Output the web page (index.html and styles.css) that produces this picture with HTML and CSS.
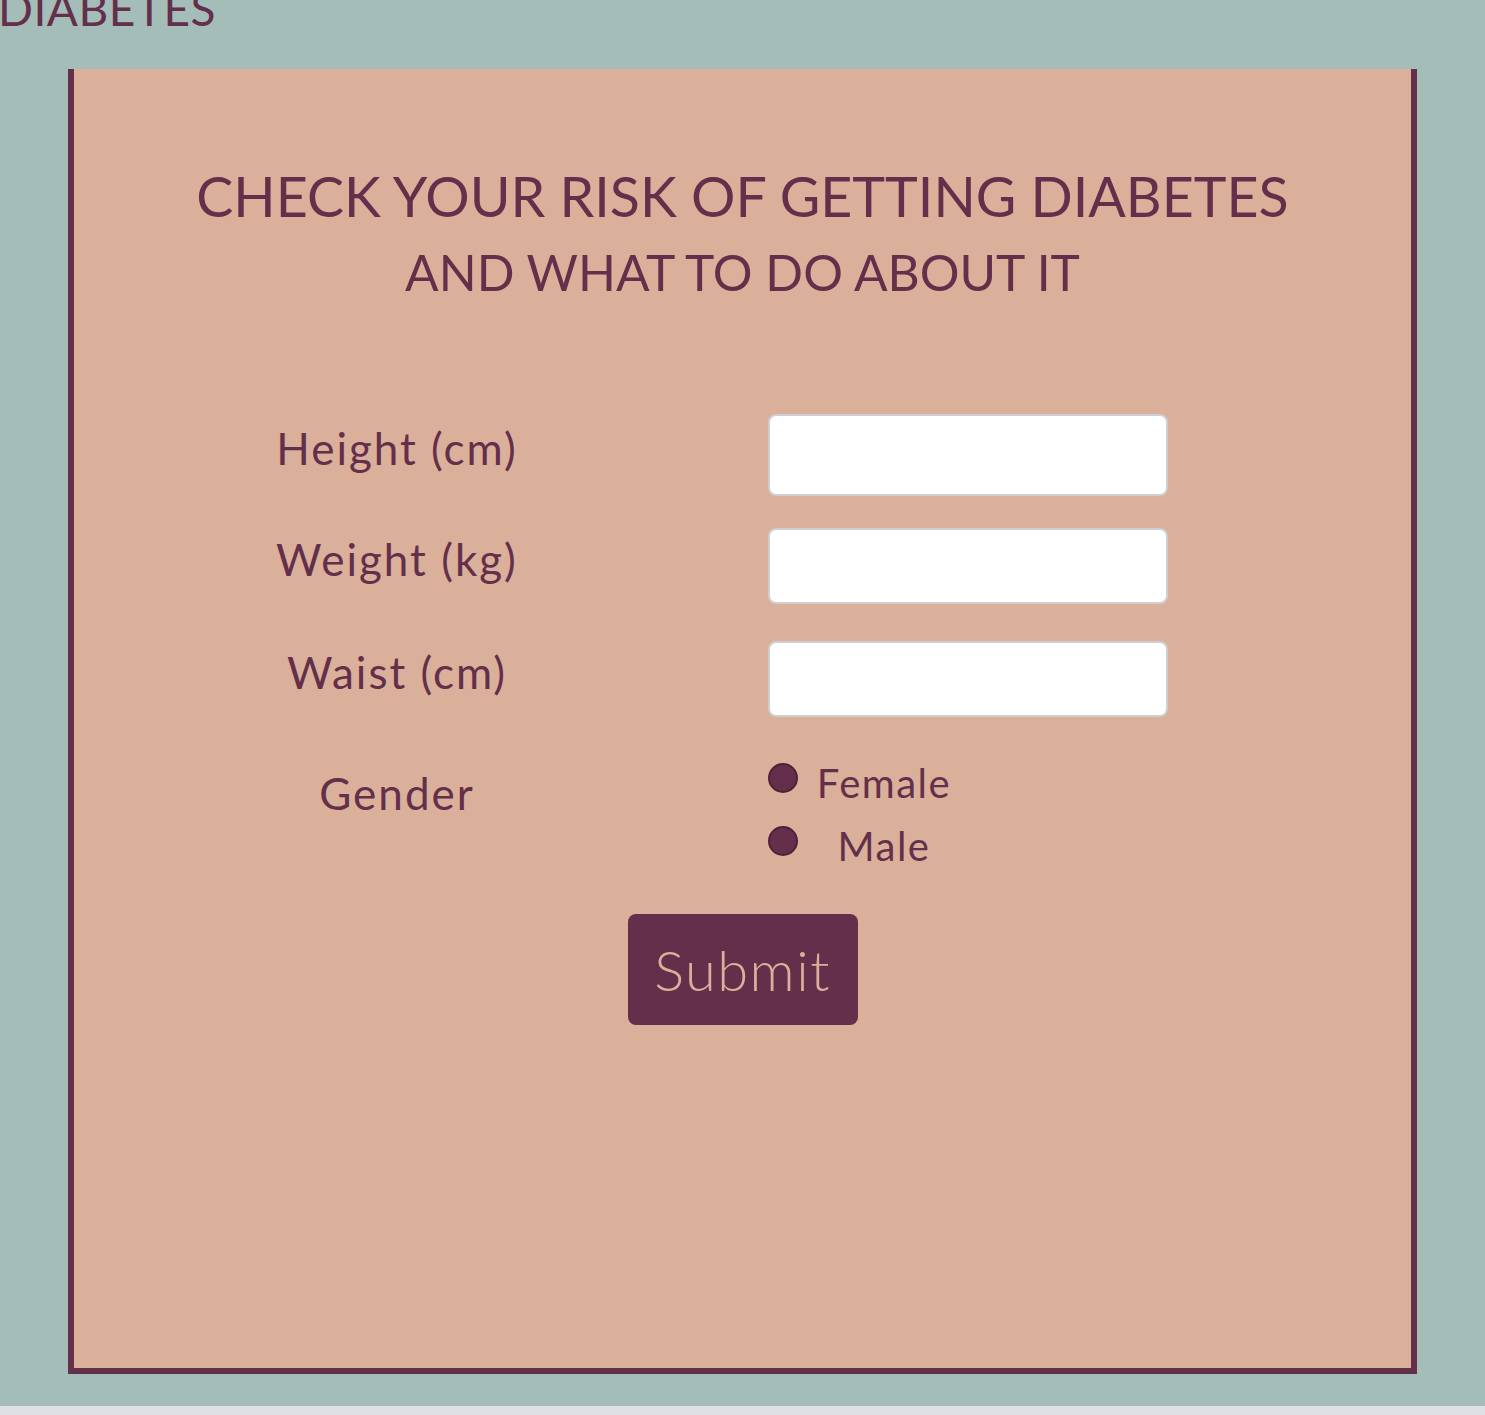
FILE: index.html
```html
<!DOCTYPE html>
<html lang="en">
<head>
<meta charset="utf-8">
<title>Diabetes risk check</title>
<link rel="stylesheet" href="styles.css">
</head>
<body>
<div class="page">
  <header class="site-header">
    <h1 class="brand">DIABETES</h1>
  </header>
  <main class="card">
    <h2 class="title">
      <span class="title-line1">CHECK YOUR RISK OF GETTING DIABETES</span>
      <span class="title-line2">AND WHAT TO DO ABOUT IT</span>
    </h2>
    <form class="form">
      <div class="row row-first">
        <label class="label" for="height">Height (cm)</label>
        <input class="input input-tall" id="height" type="text">
      </div>
      <div class="row row-second">
        <label class="label" for="weight">Weight (kg)</label>
        <input class="input" id="weight" type="text">
      </div>
      <div class="row row-third">
        <label class="label" for="waist">Waist (cm)</label>
        <input class="input" id="waist" type="text">
      </div>
      <div class="row row-gender">
        <span class="label label-gender">Gender</span>
        <div class="radios">
          <label class="radio"><span class="dot"></span><span class="radio-text">Female</span></label>
          <label class="radio"><span class="dot"></span><span class="radio-text">Male</span></label>
        </div>
      </div>
      <div class="actions">
        <button class="submit" type="button">Submit</button>
      </div>
    </form>
  </main>
</div>
</body>
</html>
```
FILE: styles.css
```css
html {
  background: #dee0e3;
}
body {
  margin: 0;
  font-family: "Lato", "Open Sans", sans-serif;
  color: #632f4b;
}
.page {
  background: #a5bdb9;
  padding: 0 68px 32px 68px;
  overflow: hidden;
}
.site-header {
  height: 69px;
  display: flow-root;
}
.brand {
  margin: -14px 0 0 -70px;
  font-size: 46px;
  line-height: 46px;
  font-weight: 400;
  letter-spacing: 0.5px;
}
.card {
  background: #dab09a;
  border: 6px solid #632f4b;
  border-top: none;
  height: 1299px;
  box-sizing: content-box;
}
.title {
  margin: 0;
  padding-top: 89px;
  text-align: center;
  font-weight: 400;
}
.title-line1 {
  display: block;
  font-size: 55.5px;
  line-height: 76px;
}
.title-line2 {
  display: block;
  font-size: 49.7px;
  line-height: 76px;
}
.form {
  margin-top: 104px;
}
.row {
  display: grid;
  grid-template-columns: 646px 400px;
  column-gap: 48px;
  align-items: center;
}
.row-second { margin-top: 32px; }
.row-third { margin-top: 37px; }
.row-gender { margin-top: 46px; align-items: start; }
.label {
  text-align: center;
  font-size: 44px;
  line-height: 60px;
  letter-spacing: 2px;
  margin-top: -14px;
}
.label-gender {
  margin-top: 0;
}
.input {
  box-sizing: border-box;
  width: 400px;
  height: 76px;
  border: 2px solid #cfcfcf;
  border-radius: 8px;
  background: #fff;
  margin: 0;
}
.input-tall {
  height: 82px;
}
.radios {
  display: flex;
  flex-direction: column;
  gap: 33px;
}
.radio {
  display: flex;
  align-items: center;
  height: 30px;
}
.dot {
  width: 30px;
  height: 30px;
  box-sizing: border-box;
  border-radius: 50%;
  background: #632f4b;
  border: 2px solid #4f2139;
  flex: none;
}
.radio-text {
  width: 172px;
  text-align: center;
  font-size: 40px;
  line-height: 40px;
  letter-spacing: 1.5px;
  margin-top: 10px;
}
.actions {
  display: flex;
  justify-content: center;
  margin-top: 58px;
}
.submit {
  width: 230px;
  height: 111px;
  border: none;
  border-radius: 8px;
  background: #632f4b;
  color: #dab09a;
  font-family: "Lato", "Open Sans", sans-serif;
  font-size: 56px;
  font-weight: 300;
  letter-spacing: 1.5px;
  padding: 0;
}
```
